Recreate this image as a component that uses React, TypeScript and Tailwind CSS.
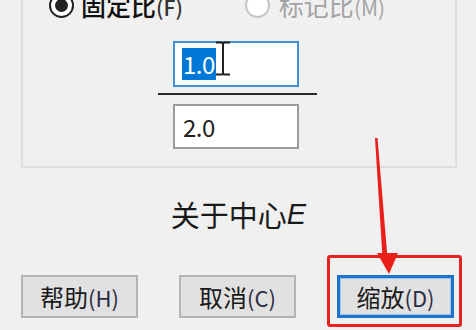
import React from "react";

const font = { fontFamily: '"Noto Sans CJK SC", "Noto Sans", sans-serif' };

function Radio({ checked, disabled }: { checked?: boolean; disabled?: boolean }) {
  return (
    <div
      className={
        "w-[25px] h-[25px] rounded-full border-2 flex items-center justify-center shrink-0 " +
        (disabled ? "border-[#c4c4c4] bg-white" : "border-[#222] bg-white")
      }
    >
      {checked && <div className="w-[13px] h-[13px] rounded-full bg-[#222]" />}
    </div>
  );
}

function Btn({ label, accel, primary }: { label: string; accel: string; primary?: boolean }) {
  return (
    <div
      className={
        "w-[117px] h-[43px] flex items-center justify-center bg-[#e1e1e1] text-[24px] leading-none text-[#1a1a1a] " +
        (primary
          ? "border-[3px] border-[#1b74c9] shadow-[inset_0_0_0_1px_#9cc6ec]"
          : "border-2 border-[#b4b4b4]")
      }
    >
      <span>{label}</span>
      <span className="text-[#2c2c44] text-[22px]">{accel}</span>
    </div>
  );
}

export default function App() {
  return (
    <div
      className="relative w-[476px] h-[330px] bg-[#f0f0f0] overflow-hidden flex flex-col"
      style={font}
    >
      {/* group box */}
      <div className="ml-[21px] w-[436px] h-[188px] mt-[-20px] border-2 border-[#dedede] flex flex-col pt-[11px] shrink-0">
        <div className="flex items-center pl-[26px] h-[25px]">
          <Radio checked />
          <span className="ml-[7px] text-[25px] leading-none text-[#111] font-medium">
            固定比<span className="text-[21px] text-[#333]">(F)</span>
          </span>
          <div className="ml-[62px]">
            <Radio disabled />
          </div>
          <span className="ml-[9px] text-[25px] leading-none text-[#a3a3a3]">
            标记比<span className="text-[21px]">(M)</span>
          </span>
        </div>

        <div className="relative ml-[150px] mt-[23px] w-[126px] h-[46px] bg-white border-2 border-[#3f8fd2] flex items-center pl-[7px]">
          <span className="bg-[#0078d7] text-white text-[24px] leading-[32px] h-[32px] px-[1px] tracking-[-0.5px]">
            1.0
          </span>
          <svg
            className="absolute left-[40px] top-[-2px]"
            width="16"
            height="36"
            viewBox="0 0 16 36"
          >
            <path d="M1 1.5 H6 M10 1.5 H15 M8 2 V33 M1 33.5 H6 M10 33.5 H15" stroke="#222" strokeWidth="2" fill="none" />
            <path d="M6 1.5 Q8 1.5 8 3 Q8 1.5 10 1.5 M6 33.5 Q8 33.5 8 32 Q8 33.5 10 33.5" stroke="#222" strokeWidth="2" fill="none" />
          </svg>
        </div>

        <div className="ml-[135px] mt-[6px] w-[159px] h-[2px] bg-[#2a2a2a]" />

        <div className="ml-[150px] mt-[9px] w-[126px] h-[45px] bg-white border-2 border-[#9a9a9a] flex items-center pl-[8px]">
          <span className="text-[24px] leading-none text-[#222] tracking-[-0.5px]">2.0</span>
        </div>
      </div>

      <div className="mt-[32px] h-[29px] flex justify-center text-[29px] leading-none text-[#1a1a1a] pl-[1px]">
        <span>关于中心</span>
        <span className="italic" style={{ fontFamily: '"Liberation Sans", sans-serif' }}>E</span>
      </div>

      <div className="mt-[46px] flex pl-[21px] gap-[41px]">
        <Btn label="帮助" accel="(H)" />
        <Btn label="取消" accel="(C)" />
        <Btn label="缩放" accel="(D)" primary />
      </div>

      {/* red annotation */}
      <div className="absolute left-[327px] top-[255px] w-[135px] h-[72px] border-[3px] border-[#e8231f] rounded-[3px]" />
      <svg className="absolute left-0 top-0" width="476" height="330" viewBox="0 0 476 330">
        <polygon points="375,138 377.5,138 387.5,258 382.5,258" fill="#ea1f1a" />
        <polygon points="377,253 398,253 389,274" fill="#ea1f1a" />
      </svg>
    </div>
  );
}
